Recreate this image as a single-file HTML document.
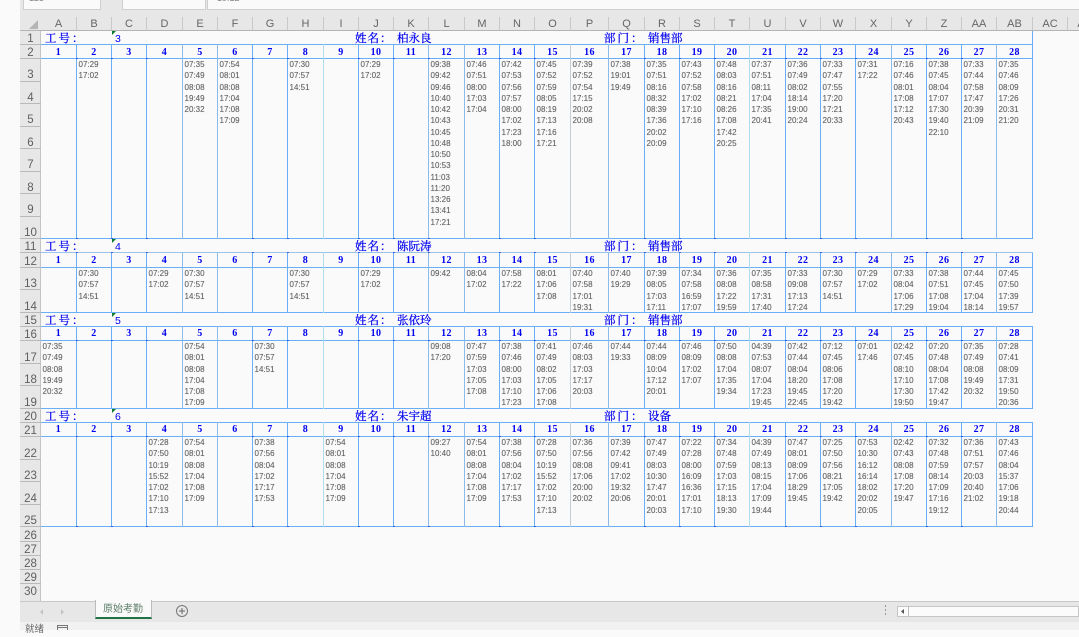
<!DOCTYPE html>
<html lang="zh"><head><meta charset="utf-8"><title>原始考勤</title>
<style>
html,body{margin:0;padding:0}
body{width:1079px;height:630px;overflow:hidden;position:relative;background:#fafafa;font-family:"Liberation Sans","Noto Sans CJK SC",sans-serif}
div,span,svg{position:absolute}
.g{display:grid;left:41px;width:992px;grid-template-columns:36px 35px 35px 36px 35px 35px 35px 36px 35px 35px 35px 36px 35px 35px 36px 38px 36px 35px 35px 35px 36px 35px 35px 36px 35px 35px 35px 36px}
.g p{margin:0;padding:0}
.d p{text-align:center;font:bold 10px/14px "Liberation Serif",serif;letter-spacing:.4px;color:#0000f0;padding-right:1px}
.t p{padding-left:1.5px;font-size:8px;line-height:11.25px;color:#666;white-space:nowrap;text-shadow:0 0 .5px #999}
.h{left:41px;top:17px;height:14px;display:grid;grid-template-columns:36px 35px 35px 36px 35px 35px 35px 36px 35px 35px 35px 36px 35px 35px 36px 38px 36px 35px 35px 35px 36px 35px 35px 36px 35px 35px 35px 36px 35px 35px}
.h p{margin:0;text-align:center;font-size:11px;line-height:14px;color:#666;border-right:1px solid #c9c9c9;box-sizing:border-box;height:13px}
.r{left:20px;width:21px;text-align:center;font-size:11.5px;line-height:12px;height:12px;color:#5f5f5f}
.l{font:11.5px/14px "Noto Serif CJK SC",serif;color:#0000f0;white-space:nowrap;-webkit-text-stroke:.25px #0000f0}
.n{font-size:10.5px;line-height:14px;color:#0000f0;left:115px}
.tri{left:112px;width:0;height:0;border-top:4px solid #0b7a2c;border-right:4px solid transparent}
</style></head><body>
<div style="left:20px;top:0;width:1059px;height:31px;background:#e7e7e7"></div>
<div style="left:23px;top:-2px;width:76px;height:10px;background:#fafafa;border:1px solid #cfcfcf;font-size:9px;color:#888;overflow:hidden"><span style="left:5px;top:-6px">123</span></div>
<div style="left:122px;top:-2px;width:82px;height:10px;background:#fafafa;border:1px solid #cfcfcf"></div>
<div style="left:207px;top:-2px;width:880px;height:10px;background:#fafafa;border:1px solid #cfcfcf;font-size:9px;color:#888;overflow:hidden"><span style="left:9px;top:-6px">19:12</span></div>
<div style="left:20px;top:30px;width:1059px;height:1px;background:#b4b4b4"></div>
<svg style="left:29px;top:20px" width="10" height="10"><path d="M9 0V9H0Z" fill="#b5b5b5"/></svg>
<div class="h"><p>A</p><p>B</p><p>C</p><p>D</p><p>E</p><p>F</p><p>G</p><p>H</p><p>I</p><p>J</p><p>K</p><p>L</p><p>M</p><p>N</p><p>O</p><p>P</p><p>Q</p><p>R</p><p>S</p><p>T</p><p>U</p><p>V</p><p>W</p><p>X</p><p>Y</p><p>Z</p><p>AA</p><p>AB</p><p>AC</p><p>AD</p></div>

<div style="left:20px;top:31px;width:21px;height:570px;background:#e7e7e7;border-right:1px solid #c4c4c4;box-sizing:border-box"></div>
<svg style="left:20px;top:31px" width="21" height="570"><path d="M0 13.5h21M0 27.5h21M0 50.5h21M0 72.5h21M0 95.5h21M0 117.5h21M0 140.5h21M0 162.5h21M0 185.5h21M0 207.5h21M0 221.5h21M0 236.5h21M0 258.5h21M0 281.5h21M0 295.5h21M0 309.5h21M0 332.5h21M0 354.5h21M0 377.5h21M0 391.5h21M0 405.5h21M0 428.5h21M0 450.5h21M0 473.5h21M0 495.5h21M0 510.5h21M0 524.5h21M0 538.5h21M0 552.5h21" stroke="#b9b9b9" fill="none"/></svg>
<div class="r" style="top:33px">1</div><div class="r" style="top:47px">2</div><div class="r" style="top:69px">3</div><div class="r" style="top:92px">4</div><div class="r" style="top:114px">5</div><div class="r" style="top:137px">6</div><div class="r" style="top:159px">7</div><div class="r" style="top:182px">8</div><div class="r" style="top:204px">9</div><div class="r" style="top:227px">10</div><div class="r" style="top:241px">11</div><div class="r" style="top:256px">12</div><div class="r" style="top:278px">13</div><div class="r" style="top:301px">14</div><div class="r" style="top:315px">15</div><div class="r" style="top:329px">16</div><div class="r" style="top:352px">17</div><div class="r" style="top:374px">18</div><div class="r" style="top:397px">19</div><div class="r" style="top:411px">20</div><div class="r" style="top:425px">21</div><div class="r" style="top:448px">22</div><div class="r" style="top:470px">23</div><div class="r" style="top:493px">24</div><div class="r" style="top:515px">25</div><div class="r" style="top:530px">26</div><div class="r" style="top:544px">27</div><div class="r" style="top:558px">28</div><div class="r" style="top:572px">29</div><div class="r" style="top:586px">30</div>

<svg style="left:0;top:0" width="1079" height="630" fill="none">
<defs><path id="v" d="M76.5 0h1M111.5 0h1M146.5 0h1M252.5 0h1M287.5 0h1M358.5 0h1M393.5 0h1M428.5 0h1M499.5 0h1M534.5 0h1M644.5 0h1M679.5 0h1M714.5 0h1M785.5 0h1M820.5 0h1M855.5 0h1M926.5 0h1M961.5 0h1" stroke="#0000d8" stroke-width="1"/></defs>
<path stroke="#69aff8" d="M41 44.5H1033M41 58.5H1033M41 238.5H1033M41 267.5H1033M41 312.5H1033M41 326.5H1033M41 340.5H1033M41 408.5H1033M41 422.5H1033M41 436.5H1033M41 526.5H1033M1032.5 31V239M1032.5 252V313M1032.5 326V409M1032.5 422V527"/>
<path stroke="#9cc3ea" d="M41 252.5H1033"/>
<path stroke="#69aff8" d="M76.5 44V239M111.5 44V239M146.5 44V239M252.5 44V239M287.5 44V239M358.5 44V239M393.5 44V239M499.5 44V239M534.5 44V239M644.5 44V239M679.5 44V239M714.5 44V239M785.5 44V239M820.5 44V239M855.5 44V239M926.5 44V239M961.5 44V239
M76.5 252V313M111.5 252V313M146.5 252V313M252.5 252V313M287.5 252V313M358.5 252V313M393.5 252V313M499.5 252V313M534.5 252V313M644.5 252V313M679.5 252V313M714.5 252V313M785.5 252V313M820.5 252V313M855.5 252V313M926.5 252V313M961.5 252V313
M76.5 326V409M111.5 326V409M146.5 326V409M252.5 326V409M287.5 326V409M358.5 326V409M393.5 326V409M499.5 326V409M534.5 326V409M644.5 326V409M679.5 326V409M714.5 326V409M785.5 326V409M820.5 326V409M855.5 326V409M926.5 326V409M961.5 326V409
M76.5 422V527M111.5 422V527M146.5 422V527M252.5 422V527M287.5 422V527M358.5 422V527M393.5 422V527M499.5 422V527M534.5 422V527M644.5 422V527M679.5 422V527M714.5 422V527M785.5 422V527M820.5 422V527M855.5 422V527M926.5 422V527M961.5 422V527"/>
<path stroke="#8cbaea" d="M182.5 44V239M217.5 44V239M428.5 44V239M464.5 44V239M608.5 44V239M891.5 44V239M996.5 44V239
M182.5 252V313M217.5 252V313M428.5 252V313M464.5 252V313M608.5 252V313M891.5 252V313M996.5 252V313
M182.5 326V409M217.5 326V409M428.5 326V409M464.5 326V409M608.5 326V409M891.5 326V409M996.5 326V409
M182.5 422V527M217.5 422V527M428.5 422V527M464.5 422V527M608.5 422V527M891.5 422V527M996.5 422V527"/>
<path stroke="#b0dcef" d="M323.5 44V239M749.5 44V239M323.5 252V313M749.5 252V313M323.5 326V409M749.5 326V409M323.5 422V527M749.5 422V527"/>
<path stroke="#c4ccd6" d="M570.5 44V239M570.5 252V313M570.5 326V409M570.5 422V527"/>
<use href="#v" y="58.5"/><use href="#v" y="238.5"/><use href="#v" y="252.5"/><use href="#v" y="340.5"/><use href="#v" y="436.5"/><use href="#v" y="526.5"/>
</svg>

<div class="l" style="left:45px;top:31px;letter-spacing:2px">工号：</div><div class="tri" style="top:31px"></div><div class="n" style="top:32px">3</div>
<div class="l" style="left:355px;top:31px;letter-spacing:1px">姓名：</div><div class="l" style="left:397px;top:31px">柏永良</div>
<div class="l" style="left:604px;top:31px;letter-spacing:2px">部门：</div><div class="l" style="left:648px;top:31px">销售部</div>

<div class="l" style="left:45px;top:239px;letter-spacing:2px">工号：</div><div class="tri" style="top:239px"></div><div class="n" style="top:240px">4</div>
<div class="l" style="left:355px;top:239px;letter-spacing:1px">姓名：</div><div class="l" style="left:397px;top:239px">陈阮涛</div>
<div class="l" style="left:604px;top:239px;letter-spacing:2px">部门：</div><div class="l" style="left:648px;top:239px">销售部</div>

<div class="l" style="left:45px;top:313px;letter-spacing:2px">工号：</div><div class="tri" style="top:313px"></div><div class="n" style="top:314px">5</div>
<div class="l" style="left:355px;top:313px;letter-spacing:1px">姓名：</div><div class="l" style="left:397px;top:313px">张依玲</div>
<div class="l" style="left:604px;top:313px;letter-spacing:2px">部门：</div><div class="l" style="left:648px;top:313px">销售部</div>

<div class="l" style="left:45px;top:409px;letter-spacing:2px">工号：</div><div class="tri" style="top:409px"></div><div class="n" style="top:410px">6</div>
<div class="l" style="left:355px;top:409px;letter-spacing:1px">姓名：</div><div class="l" style="left:397px;top:409px">朱宇超</div>
<div class="l" style="left:604px;top:409px;letter-spacing:2px">部门：</div><div class="l" style="left:648px;top:409px">设备</div>

<div class="g d" style="top:46px"><p>1</p><p>2</p><p>3</p><p>4</p><p>5</p><p>6</p><p>7</p><p>8</p><p>9</p><p>10</p><p>11</p><p>12</p><p>13</p><p>14</p><p>15</p><p>16</p><p>17</p><p>18</p><p>19</p><p>20</p><p>21</p><p>22</p><p>23</p><p>24</p><p>25</p><p>26</p><p>27</p><p>28</p></div>
<div class="g d" style="top:254px"><p>1</p><p>2</p><p>3</p><p>4</p><p>5</p><p>6</p><p>7</p><p>8</p><p>9</p><p>10</p><p>11</p><p>12</p><p>13</p><p>14</p><p>15</p><p>16</p><p>17</p><p>18</p><p>19</p><p>20</p><p>21</p><p>22</p><p>23</p><p>24</p><p>25</p><p>26</p><p>27</p><p>28</p></div>
<div class="g d" style="top:327px"><p>1</p><p>2</p><p>3</p><p>4</p><p>5</p><p>6</p><p>7</p><p>8</p><p>9</p><p>10</p><p>11</p><p>12</p><p>13</p><p>14</p><p>15</p><p>16</p><p>17</p><p>18</p><p>19</p><p>20</p><p>21</p><p>22</p><p>23</p><p>24</p><p>25</p><p>26</p><p>27</p><p>28</p></div>
<div class="g d" style="top:423px"><p>1</p><p>2</p><p>3</p><p>4</p><p>5</p><p>6</p><p>7</p><p>8</p><p>9</p><p>10</p><p>11</p><p>12</p><p>13</p><p>14</p><p>15</p><p>16</p><p>17</p><p>18</p><p>19</p><p>20</p><p>21</p><p>22</p><p>23</p><p>24</p><p>25</p><p>26</p><p>27</p><p>28</p></div>

<div class="g t" style="top:59px">
<p></p>
<p>07:29<br>17:02</p>
<p></p>
<p></p>
<p>07:35<br>07:49<br>08:08<br>19:49<br>20:32</p>
<p>07:54<br>08:01<br>08:08<br>17:04<br>17:08<br>17:09</p>
<p></p>
<p>07:30<br>07:57<br>14:51</p>
<p></p>
<p>07:29<br>17:02</p>
<p></p>
<p>09:38<br>09:42<br>09:46<br>10:40<br>10:42<br>10:43<br>10:45<br>10:48<br>10:50<br>10:53<br>11:03<br>11:20<br>13:26<br>13:41<br>17:21</p>
<p>07:46<br>07:51<br>08:00<br>17:03<br>17:04</p>
<p>07:42<br>07:53<br>07:56<br>07:57<br>08:00<br>17:02<br>17:23<br>18:00</p>
<p>07:45<br>07:52<br>07:59<br>08:05<br>08:19<br>17:13<br>17:16<br>17:21</p>
<p>07:39<br>07:52<br>07:54<br>17:15<br>20:02<br>20:08</p>
<p>07:38<br>19:01<br>19:49</p>
<p>07:35<br>07:51<br>08:16<br>08:32<br>08:39<br>17:36<br>20:02<br>20:09</p>
<p>07:43<br>07:52<br>07:58<br>17:02<br>17:10<br>17:16</p>
<p>07:48<br>08:03<br>08:16<br>08:21<br>08:26<br>17:08<br>17:42<br>20:25</p>
<p>07:37<br>07:51<br>08:11<br>17:04<br>17:35<br>20:41</p>
<p>07:36<br>07:49<br>08:02<br>18:14<br>19:00<br>20:24</p>
<p>07:33<br>07:47<br>07:55<br>17:20<br>17:21<br>20:33</p>
<p>07:31<br>17:22</p>
<p>07:16<br>07:46<br>08:01<br>17:08<br>17:12<br>20:43</p>
<p>07:38<br>07:45<br>08:04<br>17:07<br>17:30<br>19:40<br>22:10</p>
<p>07:33<br>07:44<br>07:58<br>17:47<br>20:39<br>21:09</p>
<p>07:35<br>07:46<br>08:09<br>17:26<br>20:31<br>21:20</p>
</div>

<div class="g t" style="top:268px">
<p></p>
<p>07:30<br>07:57<br>14:51</p>
<p></p>
<p>07:29<br>17:02</p>
<p>07:30<br>07:57<br>14:51</p>
<p></p>
<p></p>
<p>07:30<br>07:57<br>14:51</p>
<p></p>
<p>07:29<br>17:02</p>
<p></p>
<p>09:42</p>
<p>08:04<br>17:02</p>
<p>07:58<br>17:22</p>
<p>08:01<br>17:06<br>17:08</p>
<p>07:40<br>07:58<br>17:01<br>19:31</p>
<p>07:40<br>19:29</p>
<p>07:39<br>08:05<br>17:03<br>17:11</p>
<p>07:34<br>07:58<br>16:59<br>17:07</p>
<p>07:36<br>08:08<br>17:22<br>19:59</p>
<p>07:35<br>08:58<br>17:31<br>17:40</p>
<p>07:33<br>09:08<br>17:13<br>17:24</p>
<p>07:30<br>07:57<br>14:51</p>
<p>07:29<br>17:02</p>
<p>07:33<br>08:04<br>17:06<br>17:29</p>
<p>07:38<br>07:51<br>17:08<br>19:04</p>
<p>07:44<br>07:45<br>17:04<br>18:14</p>
<p>07:45<br>07:50<br>17:39<br>19:57</p>
</div>

<div class="g t" style="top:341px">
<p>07:35<br>07:49<br>08:08<br>19:49<br>20:32</p>
<p></p>
<p></p>
<p></p>
<p>07:54<br>08:01<br>08:08<br>17:04<br>17:08<br>17:09</p>
<p></p>
<p>07:30<br>07:57<br>14:51</p>
<p></p>
<p></p>
<p></p>
<p></p>
<p>09:08<br>17:20</p>
<p>07:47<br>07:59<br>17:03<br>17:05<br>17:08</p>
<p>07:38<br>07:46<br>08:00<br>17:03<br>17:10<br>17:23</p>
<p>07:41<br>07:49<br>08:02<br>17:05<br>17:06<br>17:08</p>
<p>07:46<br>08:03<br>17:03<br>17:17<br>20:03</p>
<p>07:44<br>19:33</p>
<p>07:44<br>08:09<br>10:04<br>17:12<br>20:01</p>
<p>07:46<br>08:09<br>17:02<br>17:07</p>
<p>07:50<br>08:08<br>17:04<br>17:35<br>19:34</p>
<p>04:39<br>07:53<br>08:07<br>17:04<br>17:23<br>19:45</p>
<p>07:42<br>07:44<br>08:04<br>18:20<br>19:45<br>22:45</p>
<p>07:12<br>07:45<br>08:06<br>17:08<br>17:20<br>19:42</p>
<p>07:01<br>17:46</p>
<p>02:42<br>07:45<br>08:10<br>17:10<br>17:30<br>19:50</p>
<p>07:20<br>07:48<br>08:04<br>17:08<br>17:42<br>19:47</p>
<p>07:35<br>07:49<br>08:08<br>19:49<br>20:32</p>
<p>07:28<br>07:41<br>08:09<br>17:31<br>19:50<br>20:36</p>
</div>

<div class="g t" style="top:437px">
<p></p>
<p></p>
<p></p>
<p>07:28<br>07:50<br>10:19<br>15:52<br>17:02<br>17:10<br>17:13</p>
<p>07:54<br>08:01<br>08:08<br>17:04<br>17:08<br>17:09</p>
<p></p>
<p>07:38<br>07:56<br>08:04<br>17:02<br>17:17<br>17:53</p>
<p></p>
<p>07:54<br>08:01<br>08:08<br>17:04<br>17:08<br>17:09</p>
<p></p>
<p></p>
<p>09:27<br>10:40</p>
<p>07:54<br>08:01<br>08:08<br>17:04<br>17:08<br>17:09</p>
<p>07:38<br>07:56<br>08:04<br>17:02<br>17:17<br>17:53</p>
<p>07:28<br>07:50<br>10:19<br>15:52<br>17:02<br>17:10<br>17:13</p>
<p>07:36<br>07:56<br>08:08<br>17:06<br>20:00<br>20:02</p>
<p>07:39<br>07:42<br>09:41<br>17:02<br>19:32<br>20:06</p>
<p>07:47<br>07:49<br>08:03<br>10:30<br>17:47<br>20:01<br>20:03</p>
<p>07:22<br>07:28<br>08:00<br>16:09<br>16:36<br>17:01<br>17:10</p>
<p>07:34<br>07:48<br>07:59<br>17:03<br>17:15<br>18:13<br>19:30</p>
<p>04:39<br>07:49<br>08:13<br>08:15<br>17:04<br>17:09<br>19:44</p>
<p>07:47<br>08:01<br>08:09<br>17:06<br>18:29<br>19:45</p>
<p>07:25<br>07:50<br>07:56<br>08:21<br>17:05<br>19:42</p>
<p>07:53<br>10:30<br>16:12<br>16:14<br>18:02<br>20:02<br>20:05</p>
<p>02:42<br>07:43<br>08:08<br>17:08<br>17:20<br>19:47</p>
<p>07:32<br>07:48<br>07:59<br>08:14<br>17:09<br>17:16<br>19:12</p>
<p>07:36<br>07:51<br>07:57<br>20:03<br>20:40<br>21:02</p>
<p>07:43<br>07:46<br>08:04<br>15:37<br>17:06<br>19:18<br>20:44</p>
</div>

<div style="left:20px;top:601px;width:1059px;height:21px;background:#e7e7e7;border-top:1px solid #c8c8c8;box-sizing:border-box"></div>
<div style="left:95px;top:600px;width:57px;height:19px;background:#fafafa;border-left:1px solid #bbb;border-right:1px solid #bbb;border-bottom:2px solid #217346;box-sizing:border-box"></div>
<div style="left:103px;top:603px;font-size:10px;line-height:14px;color:#5d7d6b;white-space:nowrap">原始考勤</div>
<svg style="left:20px;top:602px" width="175" height="20" fill="none"><path d="M23 7l-3 3 3 3" fill="#c4c4c4"/><path d="M41 7l3 3-3 3" fill="#c4c4c4"/><circle cx="162" cy="9" r="5.5" stroke="#777" stroke-width="1"/><path d="M159 9h6M162 6v6" stroke="#666"/></svg>
<svg style="left:880px;top:604px" width="30" height="14"><path d="M5 1h1v2H5zM5 5h1v2H5zM5 9h1v2H5z" fill="#999"/></svg>
<div style="left:897px;top:606px;width:182px;height:11px;background:#fbfbfb;border:1px solid #c6c6c6;box-sizing:border-box"></div>
<div style="left:908px;top:606px;width:1px;height:11px;background:#bdbdbd"></div>
<svg style="left:897px;top:606px" width="11" height="11"><path d="M7 3L4 5.5 7 8Z" fill="#555"/></svg>
<div style="left:20px;top:622px;width:1059px;height:8px;background:#f1f1f1"></div>
<div style="left:25px;top:623px;font-size:9.5px;line-height:14px;color:#666">就绪</div>
<svg style="left:56px;top:624px" width="14" height="6" fill="none"><path d="M1.5 6V1.5h10V6M1.5 3.5h10" stroke="#777"/></svg>
</body></html>
